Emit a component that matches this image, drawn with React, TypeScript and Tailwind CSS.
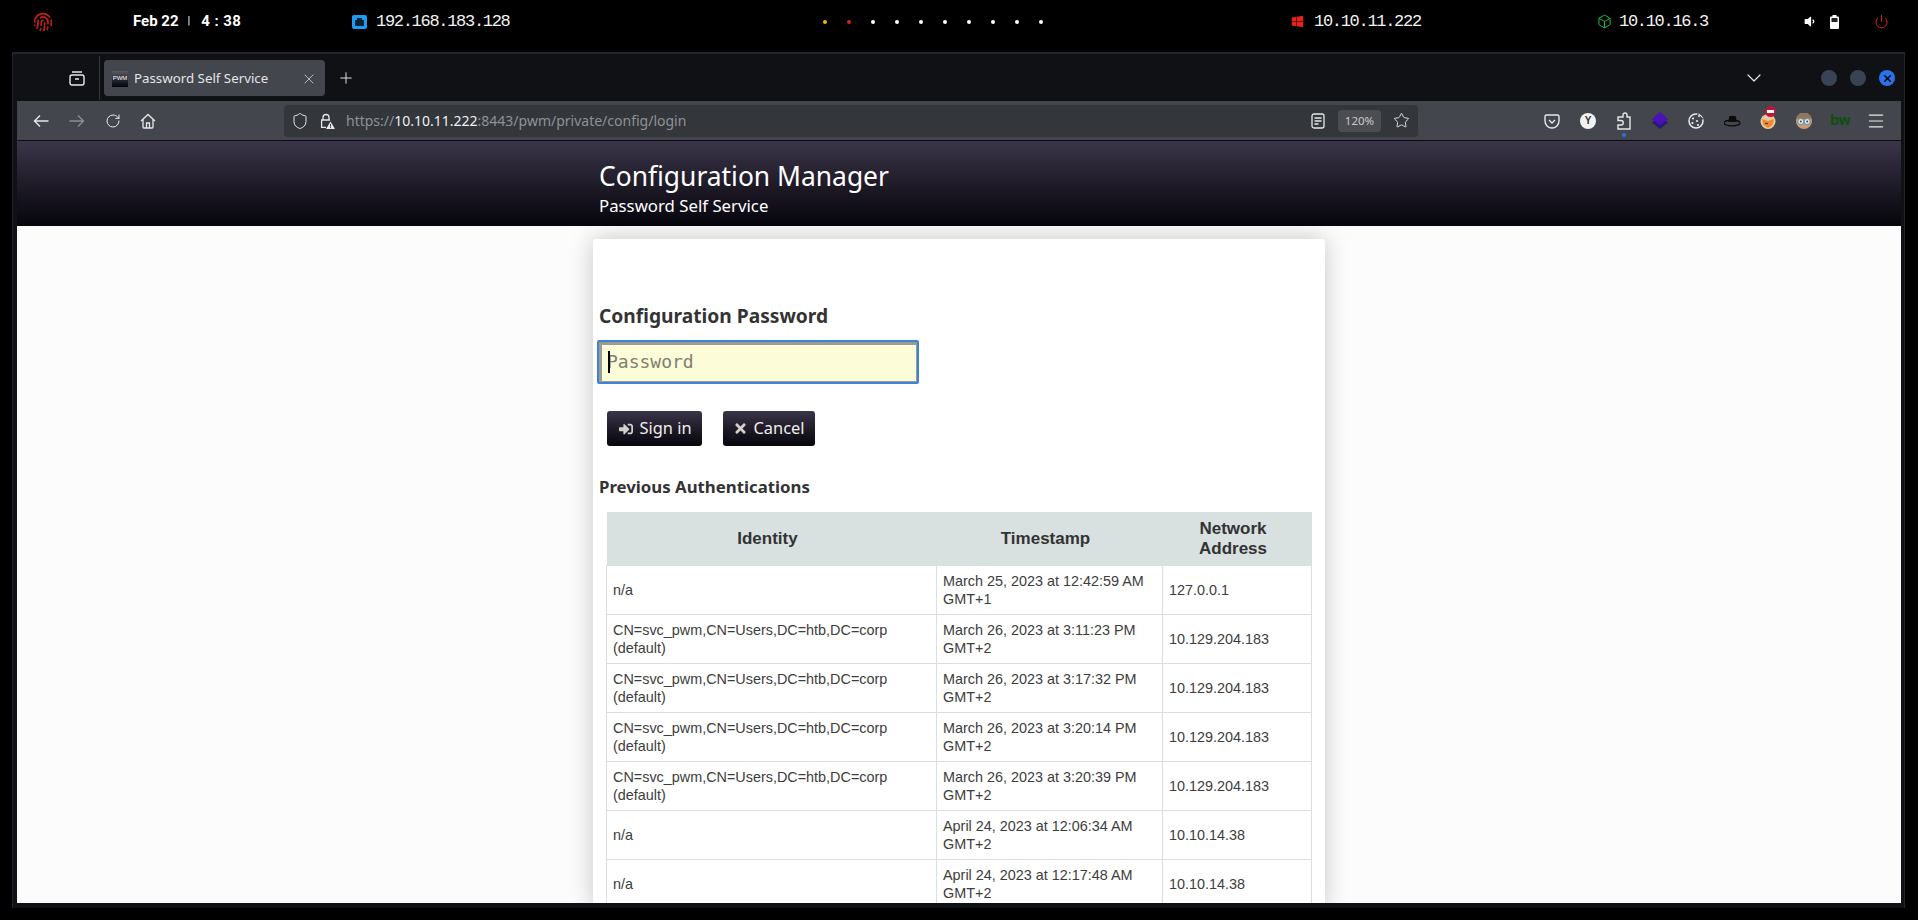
import { ChevronDown, Fingerprint, Menu, Plus, Power, RotateCw, Shield, Star, X, Box } from 'lucide-react'
import { FaSignInAlt, FaTimes, FaVolumeDown, FaWindows } from 'react-icons/fa'

const rows = [
  ['n/a', 'March 25, 2023 at 12:42:59 AM GMT+1', '127.0.0.1'],
  ['CN=svc_pwm,CN=Users,DC=htb,DC=corp (default)', 'March 26, 2023 at 3:11:23 PM GMT+2', '10.129.204.183'],
  ['CN=svc_pwm,CN=Users,DC=htb,DC=corp (default)', 'March 26, 2023 at 3:17:32 PM GMT+2', '10.129.204.183'],
  ['CN=svc_pwm,CN=Users,DC=htb,DC=corp (default)', 'March 26, 2023 at 3:20:14 PM GMT+2', '10.129.204.183'],
  ['CN=svc_pwm,CN=Users,DC=htb,DC=corp (default)', 'March 26, 2023 at 3:20:39 PM GMT+2', '10.129.204.183'],
  ['n/a', 'April 24, 2023 at 12:06:34 AM GMT+2', '10.10.14.38'],
  ['n/a', 'April 24, 2023 at 12:17:48 AM GMT+2', '10.10.14.38'],
]

const dots = ['#f5b301', '#e0201b', '#fff', '#fff', '#fff', '#fff', '#fff', '#fff', '#fff', '#fff']

function EthernetIcon() {
  return (
    <svg width="15" height="14" viewBox="0 0 15 14">
      <rect width="15" height="14" rx="2" fill="#1e9bf0" />
      <path d="M5 3h5v2h2v6H3V5h2z" fill="#06233a" />
    </svg>
  )
}

function Battery() {
  return (
    <svg width="9" height="14" viewBox="0 0 9 14">
      <rect x="2.5" y="0" width="4" height="2" fill="#fff" />
      <rect x="0" y="1.5" width="9" height="12.5" rx="1" fill="#fff" />
      <rect x="1.5" y="3" width="6" height="4" fill="#222" />
    </svg>
  )
}

function TabsIcon() {
  return (
    <svg width="16" height="16" viewBox="0 0 16 16" fill="none" stroke="#e8e8ea" strokeWidth="1.4">
      <rect x="1" y="5" width="14" height="10" rx="2" />
      <path d="M3 2h10M6 9h4" />
    </svg>
  )
}

function NavArrow({ back, color }: { back?: boolean; color: string }) {
  return (
    <svg width="16" height="14" viewBox="0 0 16 14" fill="none" stroke={color} strokeWidth="1.4">
      <path d={back ? 'M15.500 7H1.500M7 1.500L1.500 7 7 12.500' : 'M.5 7h14M9 1.500L14.500 7 9 12.500'} />
    </svg>
  )
}

function HomeIcon() {
  return (
    <svg width="16" height="16" viewBox="0 0 16 16" fill="none" stroke="#e8e8ea" strokeWidth="1.3">
      <path d="M1 8l7-6.500L15 8M3 6.500V14a1 1 0 0 0 1 1h8a1 1 0 0 0 1-1V6.500M6.500 15v-5h3v5" />
    </svg>
  )
}

function InsecureLock() {
  return (
    <svg width="16" height="16" viewBox="0 0 16 16">
      <path d="M4 7V4.500a3 3 0 0 1 6 0V7M2 7h9M2.600 7v7.400H7" fill="none" stroke="#e8e8ea" strokeWidth="1.3" />
      <path d="M11.500 8.500L16 16H7z" fill="#e8e8ea" />
      <path d="M11.500 11v2.600M11.500 14.200v.9" stroke="#33363b" strokeWidth="1" />
    </svg>
  )
}

function ReaderIcon() {
  return (
    <svg width="14" height="16" viewBox="0 0 14 16" fill="none" stroke="#e8e8ea" strokeWidth="1.3">
      <rect x="1" y="1" width="12" height="14" rx="2" />
      <path d="M3.500 5h7M3.500 8h7M3.500 11h4" />
    </svg>
  )
}

function PocketIcon() {
  return (
    <svg width="16" height="16" viewBox="0 0 16 16" fill="none" stroke="#e8e8ea" strokeWidth="1.4">
      <path d="M2.500 2h11A1.500 1.500 0 0 1 15 3.500V8a7 7 0 0 1-14 0V3.500A1.500 1.500 0 0 1 2.500 2z" />
      <path d="M5 7l3 3 3-3" />
    </svg>
  )
}

function YIcon() {
  return (
    <div className="flex h-4 w-4 items-center justify-center rounded-full bg-[#f2f2f2] font-['Liberation_Sans',sans-serif] text-[10px] font-bold leading-none text-[#333]">
      Y
    </div>
  )
}

function PuzzleIcon() {
  return (
    <svg width="14" height="18" viewBox="0 0 14 18" fill="none" stroke="#e8e8ea" strokeWidth="1.4">
      <path d="M6 5V3a2 2 0 0 1 4 0v2h3v12H1v-4h3a2 2 0 0 0 0-4.500H1V5z" />
    </svg>
  )
}

function StackIcon() {
  return (
    <svg width="16" height="17" viewBox="0 0 16 17">
      <path d="M8 5l8 5.500L8 17l-8-6.500z" fill="#2a1a78" />
      <path d="M8 0l8 7-8 6-8-6z" fill="#4a12b8" />
    </svg>
  )
}

function CookieIcon() {
  return (
    <svg width="16" height="17" viewBox="0 0 16 17">
      <circle cx="8" cy="9" r="7" fill="none" stroke="#e8e8ea" strokeWidth="1.500" />
      <path d="M9 1l6.500 6-3 1.500L9.500 6z" fill="#43464d" />
      <circle cx="5" cy="6.500" r="1.100" fill="#e8e8ea" />
      <circle cx="4.500" cy="11" r="1.100" fill="#e8e8ea" />
      <circle cx="9" cy="9" r="1.100" fill="#e8e8ea" />
      <circle cx="10" cy="13" r="1.100" fill="#e8e8ea" />
      <circle cx="11" cy="4" r="1" fill="#e8e8ea" />
    </svg>
  )
}

function HatIcon() {
  return (
    <svg width="17" height="12" viewBox="0 0 17 12">
      <path d="M5 1.500C7 .5 10 .5 12 1.500L12.500 6.500H4.500z" fill="#0b0b0c" />
      <ellipse cx="8" cy="8" rx="8" ry="2.800" fill="none" stroke="#0b0b0c" strokeWidth="1.200" />
      <path d="M4.500 5.500h8v1.500h-8z" fill="#111" />
    </svg>
  )
}

function FoxIcon() {
  return (
    <div className="relative h-4 w-4">
      <svg width="16" height="16" viewBox="0 0 16 16">
        <circle cx="8" cy="8.500" r="7.500" fill="#e8c9a0" />
        <path d="M2 6l6 2 6-2-1.500 6L8 15l-4.500-3z" fill="#ef8a2a" />
        <path d="M5 10.500h3" stroke="#333" strokeWidth="1" />
      </svg>
      <div className="absolute left-[5px] top-[-7px] flex h-[11px] w-[11px] items-center justify-center rounded-full bg-[#b9183b]">
        <div className="h-[3px] w-[7px] bg-white" />
      </div>
    </div>
  )
}

function FaceIcon() {
  return (
    <svg width="16" height="16" viewBox="0 0 16 16">
      <circle cx="8" cy="8" r="8" fill="#c99a78" />
      <path d="M1 6a7 7 0 0 1 14 0z" fill="#8d7a5e" />
      <circle cx="4.800" cy="8.500" r="3" fill="#d6ecec" stroke="#6f8f93" />
      <circle cx="11.200" cy="8.500" r="3" fill="#d6ecec" stroke="#6f8f93" />
      <circle cx="4.800" cy="8.500" r="1" fill="#446" />
      <circle cx="11.200" cy="8.500" r="1" fill="#446" />
    </svg>
  )
}

function Toolslot({ children }: { children: React.ReactNode }) {
  return <div className="flex h-[24px] w-9 shrink-0 items-center justify-center">{children}</div>
}

export default function App() {
  return (
    <div className="flex h-[920px] w-[1918px] flex-col overflow-hidden bg-black font-['Noto_Sans',sans-serif]">
      {/* system bar */}
      <div className="flex h-[52px] shrink-0 items-center pb-[9px] font-['Liberation_Mono',monospace] text-[17px] tracking-[-1.300px] text-[#f2f2f2]">
        <Fingerprint size={20} color="#c0201c" strokeWidth={2} className="ml-[33px] shrink-0" />
        <div className="ml-[80px] flex w-[127px] shrink-0 items-center font-['Roboto',sans-serif] text-[15px] font-bold tracking-normal text-white">
          <span>Feb 22</span>
          <span className="ml-[9px] mr-[11px] text-[11px] font-normal">|</span>
          <span className="tracking-[0.4px]">4 : 38</span>
        </div>
        <div className="ml-[92px] flex w-[471px] shrink-0 items-center gap-[9px]">
          <EthernetIcon />
          <span>192.168.183.128</span>
        </div>
        <div className="flex shrink-0 items-center gap-[20px]">
          {dots.map((c, i) => (
            <div key={i} className="h-1 w-1 rounded-full" style={{ backgroundColor: c }} />
          ))}
        </div>
        <div className="ml-[248px] flex w-[306px] shrink-0 items-center gap-[10px]">
          <FaWindows size={13} color="#e8231a" />
          <span>10.10.11.222</span>
        </div>
        <div className="flex w-[206px] shrink-0 items-center gap-[7px]">
          <Box size={15} color="#1fbf4c" strokeWidth={1.600} />
          <span>10.10.16.3</span>
        </div>
        <FaVolumeDown size={13} color="#fff" className="shrink-0" />
        <div className="ml-[14px] shrink-0"><Battery /></div>
        <Power size={15} color="#d3201a" strokeWidth={1.600} className="ml-[35px] shrink-0" />
      </div>

      {/* browser window */}
      <div className="ml-[12px] mr-[13px] mb-[12px] flex min-h-0 flex-1 flex-col border border-t-2 border-[#22252c] border-b-0">
        <div className="flex min-h-0 flex-1 flex-col border-l-4 border-r-[3px] border-b-[5px] border-[#0f1115]">
          {/* tab strip */}
          <div className="flex h-[47px] shrink-0 items-center bg-[#0f1115] pt-[1px] text-[13.300px] text-[#e4e4e6]">
            <div className="ml-[52px] shrink-0"><TabsIcon /></div>
            <div className="ml-[14px] h-[44px] w-px shrink-0 bg-[#34363c]" />
            <div className="ml-[4px] flex h-[36px] w-[221px] shrink-0 items-center rounded-[4px] bg-[#43464d] pl-[8px] pt-px">
              <div className="flex h-4 w-4 shrink-0 items-center justify-center bg-gradient-to-b from-[#5a5a66] to-[#05050a] font-['Liberation_Sans',sans-serif] text-[6px] text-white">PWM</div>
              <span className="ml-[6px]">Password Self Service</span>
              <X size={16} strokeWidth={1.100} className="ml-auto mr-[8px]" />
            </div>
            <Plus size={18} strokeWidth={1.300} className="ml-[12px] shrink-0" />
            <ChevronDown size={24} strokeWidth={1.200} className="ml-[1387px] shrink-0" />
            <div className="ml-[55px] h-4 w-4 shrink-0 rounded-full bg-[#3a4354]" />
            <div className="ml-[13px] h-4 w-4 shrink-0 rounded-full bg-[#3a4354]" />
            <div className="ml-[13px] flex h-4 w-4 shrink-0 items-center justify-center rounded-full bg-[#2a72e8]">
              <X size={11} strokeWidth={3.500} color="#05070c" />
            </div>
          </div>

          {/* toolbar */}
          <div className="flex h-[40px] shrink-0 items-center border-b border-[#0c0c10] bg-[#43464d]">
            <div className="ml-[16px] shrink-0"><NavArrow back color="#e8e8ea" /></div>
            <div className="ml-[20px] shrink-0"><NavArrow color="#8c8e93" /></div>
            <RotateCw size={16} color="#e8e8ea" strokeWidth={1.500} className="ml-[20px] shrink-0" />
            <div className="ml-[19px] shrink-0"><HomeIcon /></div>
            <div className="ml-[128px] flex h-[32px] w-[1134px] shrink-0 items-center rounded-[4px] bg-[#33363b] pr-[8px] text-[14px] text-[#8f9195]">
              <Shield size={18} color="#e8e8ea" strokeWidth={1.300} className="ml-[7px] shrink-0" />
              <div className="ml-[10px] shrink-0"><InsecureLock /></div>
              <span className="ml-[11px]">https://<span className="text-[#f0f0f2]">10.10.11.222</span>:8443/pwm/private/config/login</span>
              <div className="ml-auto shrink-0"><ReaderIcon /></div>
              <div className="ml-[13px] flex h-[22px] w-[43px] shrink-0 items-center justify-center rounded-[4px] bg-[#4b4d52] text-[11.500px] text-[#c8c8cb]">120%</div>
              <Star size={17} color="#e8e8ea" strokeWidth={1.300} className="ml-[12px] shrink-0" />
            </div>
            <div className="ml-[116px] flex shrink-0 items-center">
              <Toolslot><PocketIcon /></Toolslot>
              <Toolslot><YIcon /></Toolslot>
              <div className="relative">
                <Toolslot><PuzzleIcon /></Toolslot>
                <div className="absolute bottom-[-4px] left-[16px] h-1 w-1 rounded-full bg-[#2a72e8]" />
              </div>
              <Toolslot><StackIcon /></Toolslot>
              <Toolslot><CookieIcon /></Toolslot>
              <Toolslot><HatIcon /></Toolslot>
              <Toolslot><FoxIcon /></Toolslot>
              <Toolslot><FaceIcon /></Toolslot>
              <Toolslot><span className="font-['Liberation_Sans',sans-serif] text-[15px] font-bold tracking-tight text-[#0f4d0f]">bw</span></Toolslot>
              <Toolslot><Menu size={20} color="#e8e8ea" strokeWidth={1.400} /></Toolslot>
            </div>
          </div>

          {/* page */}
          <div className="min-h-0 flex-1 overflow-hidden bg-[#fcfcfc]">
            <div className="h-[85px] bg-gradient-to-b from-[#3b3549] to-[#07060c] pl-[582px] pt-[16px] text-white">
              <div className="text-[26.400px] leading-[38px]">Configuration Manager</div>
              <div className="text-[16.800px] leading-[22px]">Password Self Service</div>
            </div>
            <div className="ml-[576px] mt-[13px] w-[732px] rounded-t-[3px] bg-white pl-[6px] pr-[14px] pt-[61px] text-[#333] shadow-[0_0_24px_rgba(0,0,0,0.22)]">
              <div className="text-[19.200px] font-bold leading-[32px]">Configuration Password</div>
              <div className="relative -ml-[2px] mt-[8px] flex h-[44px] w-[322px] items-center rounded-[2px] border-2 border-[#3b82d8] bg-[#fcfcd9] pb-[2px] pl-[8px] font-['DejaVu_Sans_Mono',monospace] text-[18px] text-[#7f8070] shadow-[inset_1px_1px_0_2px_#9b9b90]">
                <span>Password</span>
                <div className="absolute left-[9px] top-[9px] h-[22px] w-[2px] bg-black" />
              </div>
              <div className="ml-[8px] mt-[27px] flex gap-[21px] text-[16.400px] text-[#eeeeee]">
                <div className="flex h-[35px] w-[95px] items-center justify-center gap-[6px] rounded-[3px] bg-gradient-to-b from-[#3b3549] to-[#07060c] pl-[2px]">
                  <FaSignInAlt size={14} color="#d0d0d0" />
                  <span>Sign in</span>
                </div>
                <div className="flex h-[35px] w-[92px] items-center justify-center gap-[5px] rounded-[3px] bg-gradient-to-b from-[#3b3549] to-[#07060c]">
                  <FaTimes size={15} color="#d0d0d0" />
                  <span>Cancel</span>
                </div>
              </div>
              <div className="mt-[29px] text-[16.800px] font-bold leading-[24px]">Previous Authentications</div>
              <table className="ml-[7px] mt-[13px] w-[705px] table-fixed border-collapse font-['Liberation_Sans',sans-serif] text-[14.400px] leading-[18px] text-[#3d3d3d]">
                <colgroup>
                  <col className="w-[330px]" />
                  <col className="w-[226px]" />
                  <col className="w-[149px]" />
                </colgroup>
                <thead>
                  <tr className="h-[53px] bg-[#d8e1e0] text-center text-[17px] font-bold leading-[20px] text-[#333]">
                    <th className="pl-[4px] pr-[12px] pt-[2px]">Identity</th>
                    <th className="pl-[4px] pr-[12px] pt-[2px]">Timestamp</th>
                    <th className="pl-[4px] pr-[12px] pt-[2px]">Network Address</th>
                  </tr>
                </thead>
                <tbody>
                  {rows.map((r, i) => (
                    <tr key={i} className="h-[49px]">
                      {r.map((c, j) => (
                        <td key={j} className="border border-[#d9e0e0] p-[6px] align-middle">{c}</td>
                      ))}
                    </tr>
                  ))}
                </tbody>
              </table>
            </div>
          </div>
        </div>
      </div>
    </div>
  )
}
